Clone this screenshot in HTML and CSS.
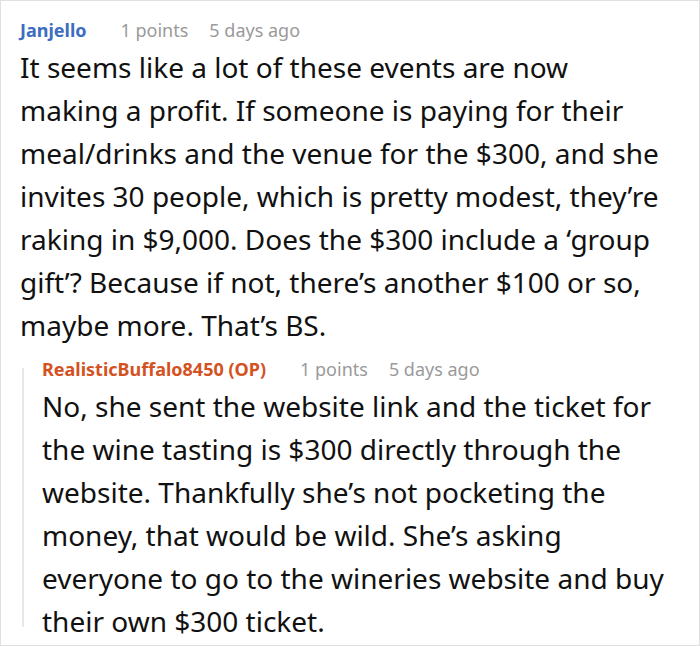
FILE: index.html
```html
<!DOCTYPE html>
<html>
<head>
<meta charset="utf-8">
<link rel="stylesheet" href="styles.css">
</head>
<body>
<div class="frame">
  <div class="comment">
    <div class="meta">
      <span class="author">Janjello</span>
      <span class="info">1 points</span>
      <span class="info">5 days ago</span>
    </div>
    <div class="text">It seems like a lot of these events are now making a profit. If someone is paying for their meal/drinks and the venue for the $300, and she invites 30 people, which is pretty modest, they’re raking in $9,000. Does the $300 include a ‘group gift’? Because if not, there’s another $100 or so, maybe more. That’s BS.</div>
    <div class="reply">
      <div class="meta">
        <span class="author op">RealisticBuffalo8450 (OP)</span>
        <span class="info">1 points</span>
        <span class="info">5 days ago</span>
      </div>
      <div class="text">No, she sent the website link and the ticket for the wine tasting is $300 directly through the website. Thankfully she’s not pocketing the money, that would be wild. She’s asking everyone to go to the wineries website and buy their own $300 ticket.</div>
    </div>
  </div>
</div>
</body>
</html>
```
FILE: styles.css
```css
html, body {
  margin: 0;
  padding: 0;
  background: #fff;
}
.frame {
  box-sizing: border-box;
  width: 700px;
  height: 646px;
  border: 1px solid #e0e0e0;
  font-family: "Noto Sans", "Open Sans", sans-serif;
  color: #111;
  overflow: hidden;
}
.comment {
  padding: 17px 30px 0 19px;
}
.meta {
  display: flex;
  align-items: baseline;
  font-size: 18px;
  line-height: 24px;
}
.author {
  font-weight: 700;
  color: #3c6dc0;
  margin-right: 34px;
}
.author.op {
  color: #d4521f;
}
.info {
  color: #9a9a9a;
  margin-right: 21px;
}
.text {
  font-size: 28px;
  line-height: 43px;
  margin-top: 4px;
}
.reply {
  position: relative;
  margin: 10px 0 0 2px;
  padding-left: 20px;
}
.reply::before {
  content: "";
  position: absolute;
  left: 0;
  top: 11px;
  bottom: 16px;
  width: 2px;
  background: #e8e8e8;
}
.reply .text {
  margin-top: 4px;
}
```
